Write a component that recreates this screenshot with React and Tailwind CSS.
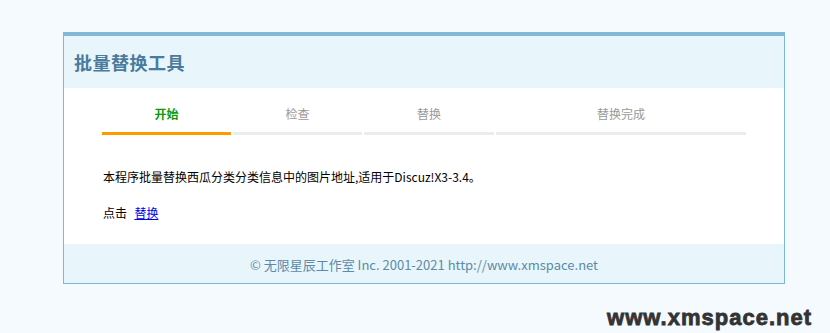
export default function App() {
  const steps = [
    { label: "开始", active: true, w: "w-[129px]" },
    { label: "检查", w: "w-[129px]" },
    { label: "替换", w: "w-[130px]" },
    { label: "替换完成", w: "w-[250px]" },
  ];

  return (
    <div
      className="w-[830px] h-[333px] bg-[#f4faff] pt-[32px] relative"
      style={{ fontFamily: '"Noto Sans CJK SC", "Liberation Sans", sans-serif' }}
    >
      <div className="ml-[63px] w-[722px] border border-[#7db8d9] border-t-4 border-t-[#82b8d6] bg-white">
        {/* HEADER */}
        <div className="h-[52px] bg-[#e8f6fb] flex items-center px-[10px]">
          <h2 className="text-[18px] font-bold text-[#4b7a9c] tracking-[0.5px]">批量替换工具</h2>
        </div>

        {/* STEPS */}
        <div className="flex gap-[2px] pl-[38px] pt-[16px]">
          {steps.map((s) => (
            <div key={s.label} className={s.w}>
              <div
                className={`text-center text-[12px] leading-[20px] ${
                  s.active ? "text-[#0a9a0a] font-bold" : "text-[#999]"
                }`}
              >
                {s.label}
              </div>
              <div className={`mt-[8px] h-[3px] ${s.active ? "bg-[#ff9900]" : "bg-[#ececec]"}`} />
            </div>
          ))}
        </div>

        {/* BODY */}
        <div className="pl-[39px] pt-[32px] pb-[21px] text-[12px] text-black">
          <p className="leading-[20px]">本程序批量替换西瓜分类分类信息中的图片地址,适用于Discuz!X3-3.4。</p>
          <p className="leading-[20px] mt-[16px]">
            点击&nbsp;&nbsp;
            <a href="#" className="text-[#0000ee] underline ml-[2px]">替换</a>
          </p>
        </div>

        {/* FOOTER */}
        <div className="h-[39px] bg-[#e8f6fb] flex items-center justify-center text-[13px] text-[#5c8aa8] pt-[3px]">
          © 无限星辰工作室 Inc. 2001-2021 http://www.xmspace.net
        </div>
      </div>

      <div
        className="absolute right-[18px] bottom-[-1px] text-[22px] font-bold text-[#333] tracking-[1px] [-webkit-text-stroke:0.8px_#333]"
        style={{ fontFamily: '"Liberation Sans", sans-serif' }}
      >
        www.xmspace.net
      </div>
    </div>
  );
}
